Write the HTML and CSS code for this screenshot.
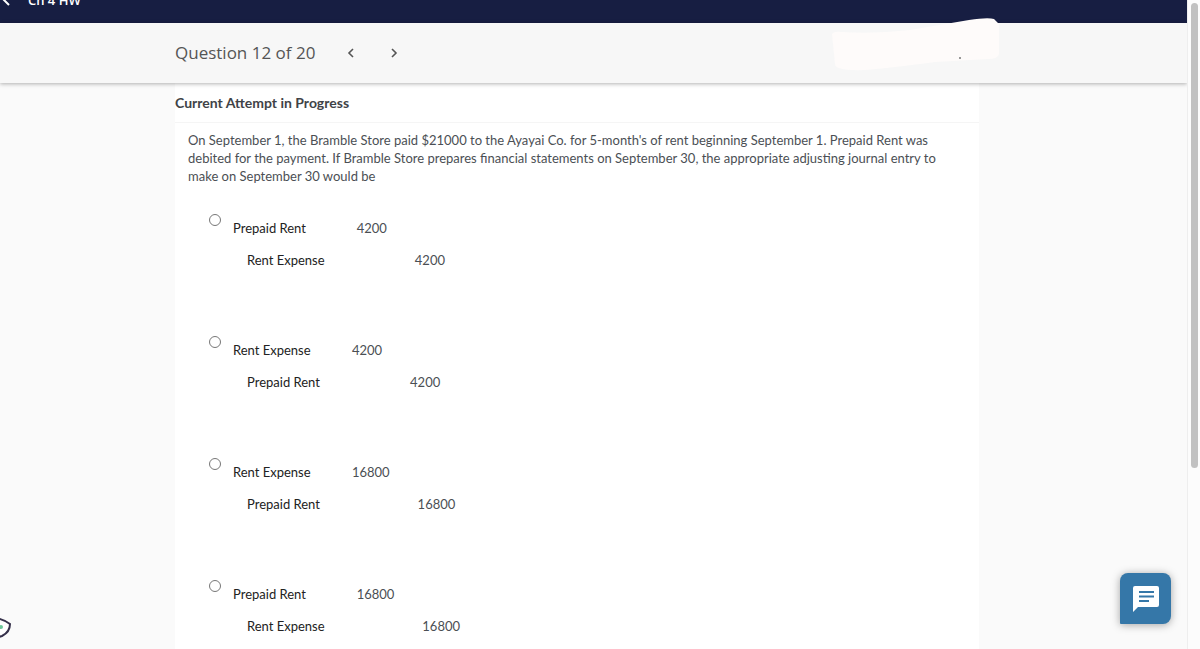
FILE: index.html
```
<!DOCTYPE html>
<html lang="en">
<head>
<meta charset="utf-8">
<title>Ch 4 HW</title>
<link rel="stylesheet" href="styles.css">
</head>
<body>
<div class="shell">
  <div class="page">
    <header class="topbar">
      <button class="back" type="button" aria-label="Back">
        <svg width="16" height="16" viewBox="0 0 16 16"><path d="M9 1 3 7l6 6" fill="none" stroke="#fff" stroke-width="2"/></svg>
      </button>
      <span class="topbar-title">Ch 4 HW</span>
    </header>
    <nav class="question-nav">
      <h1 class="question-title">Question 12 of 20</h1>
      <button class="step" type="button" aria-label="Previous question">
        <svg width="8" height="10" viewBox="0 0 8 10"><path d="M6 1 2 5l4 4" fill="none" stroke="#555" stroke-width="1.6"/></svg>
      </button>
      <button class="step" type="button" aria-label="Next question">
        <svg width="8" height="10" viewBox="0 0 8 10"><path d="m2 1 4 4-4 4" fill="none" stroke="#555" stroke-width="1.6"/></svg>
      </button>
      <svg class="smudge" width="170" height="56" viewBox="0 0 170 56" aria-hidden="true"><path d="M2 17Q4 14 12 15Q45 17 80 13L139 3Q158 0 164 2L169 7V37Q168 42 158 42L105 45Q60 51 35 53Q5 54 5 47Z" fill="#fefbfa"/><path d="M129 41h2" stroke="#777" stroke-width="1.5"/></svg>
    </nav>
    <main class="content">
      <h2 class="status">Current Attempt in Progress</h2>
      <form class="question">
        <p class="prompt">On September 1, the Bramble Store paid $21000 to the Ayayai Co. for 5-month's of rent beginning September 1. Prepaid Rent was debited for the payment. If Bramble Store prepares financial statements on September 30, the appropriate adjusting journal entry to make on September 30 would be</p>
        <div class="options">
          <div class="option">
            <input class="radio" type="radio" name="answer" id="a1" aria-labelledby="t1">
            <label for="a1"><table class="entry" id="t1">
              <tr><td class="account">Prepaid Rent</td><td class="debit">4200</td><td></td></tr>
              <tr><td class="account credited">Rent Expense</td><td></td><td>4200</td></tr>
            </table></label>
          </div>
          <div class="option">
            <input class="radio" type="radio" name="answer" id="a2" aria-labelledby="t2">
            <label for="a2"><table class="entry" id="t2">
              <tr><td class="account">Rent Expense</td><td class="debit">4200</td><td></td></tr>
              <tr><td class="account credited">Prepaid Rent</td><td></td><td>4200</td></tr>
            </table></label>
          </div>
          <div class="option">
            <input class="radio" type="radio" name="answer" id="a3" aria-labelledby="t3">
            <label for="a3"><table class="entry" id="t3">
              <tr><td class="account">Rent Expense</td><td class="debit">16800</td><td></td></tr>
              <tr><td class="account credited">Prepaid Rent</td><td></td><td>16800</td></tr>
            </table></label>
          </div>
          <div class="option">
            <input class="radio" type="radio" name="answer" id="a4" aria-labelledby="t4">
            <label for="a4"><table class="entry" id="t4">
              <tr><td class="account">Prepaid Rent</td><td class="debit">16800</td><td></td></tr>
              <tr><td class="account credited">Rent Expense</td><td></td><td>16800</td></tr>
            </table></label>
          </div>
        </div>
      </form>
    </main>
  </div>
  <div class="scroll-track"><div class="scroll-thumb"></div></div>
</div>
<svg class="badge" width="14" height="24" viewBox="0 0 14 24" aria-hidden="true"><path d="M-4 2Q5 4 10 8Q10 16 2 20L-4 22" fill="#fff" stroke="#35304a" stroke-width="2"/><circle cx="1" cy="11" r="2" fill="#6fc79a"/></svg>
<button class="chat" type="button" aria-label="Open chat">
  <svg width="28" height="28" viewBox="0 0 28 28"><path d="M3 1h22q2 0 2 2v17q0 2-2 2H6l-5 5V3q0-2 2-2Z" fill="#fff"/><path d="M7 7h15M7 11.500h15M7 16h10" stroke="#3577a8" stroke-width="2.200"/></svg>
</button>
</body>
</html>
```
FILE: styles.css
```
* {
  box-sizing: border-box;
}

body {
  margin: 0;
  height: 100vh;
  overflow: hidden;
  background: #fafafa;
  color: #4b4f54;
  font: 13px/18px Lato, sans-serif;
}

button {
  display: flex;
  align-items: center;
  justify-content: center;
  margin: 0;
  padding: 0;
  border: 0;
  background: none;
  cursor: pointer;
}

.shell {
  display: flex;
  height: 100%;
}

.page {
  flex: 1;
  display: flex;
  flex-direction: column;
  min-width: 0;
  overflow: hidden;
}

/* Scrolled halfway out of view */
.topbar {
  flex: none;
  display: flex;
  align-items: center;
  gap: 12px;
  height: 46px;
  margin-top: -23px;
  background: #171e42;
  color: #fff;
}

.topbar-title {
  font: 600 13px/20px "Open Sans", sans-serif;
}

.question-nav {
  position: relative;
  z-index: 1;
  flex: none;
  display: flex;
  align-items: center;
  height: 60px;
  padding-left: 175px;
  background: #f7f7f7;
  box-shadow: 0 1px 4px rgba(0, 0, 0, 0.3);
}

.question-title {
  margin: 0 14px 0 0;
  color: #555;
  font: 400 17px/24px "Open Sans", sans-serif;
}

.step {
  width: 43px;
  height: 44px;
}

.smudge {
  position: absolute;
  top: -6px;
  right: 187px;
}

.content {
  flex: 1;
  margin: 0 208px 0 175px;
  background: #fff;
}

.status {
  margin: 0;
  padding: 11px 0 10px;
  border-bottom: 1px solid #f5f5f5;
  color: #3f4347;
  font: 700 14px/18px Lato, sans-serif;
}

.question {
  padding: 8px 12px 0 13px;
}

.prompt {
  margin: 0;
}

.options {
  display: grid;
  gap: 58px;
  padding: 27px 0 0 21px;
}

.option {
  display: flex;
  align-items: flex-start;
  gap: 12px;
}

.radio {
  appearance: none;
  flex: none;
  width: 12px;
  height: 12px;
  margin: 2px 0 0;
  border: 1px solid #777;
  border-radius: 50%;
  background: #fff;
}

.radio:checked {
  background: #3577a8;
}

.entry {
  border-collapse: collapse;
}

.entry td {
  height: 32px;
  padding: 0;
}

.entry .account {
  padding-right: 32px;
  color: #222;
}

.entry .credited {
  padding-left: 14px;
}

.entry .debit {
  padding-right: 28px;
}

.scroll-track {
  flex: none;
  width: 13px;
  padding: 3px 2px 0 3px;
  border-left: 1px solid #eee;
  background: #fcfcfc;
}

.scroll-thumb {
  height: 72%;
  border-radius: 4px;
  background: #c1c1c1;
}

.badge {
  position: absolute;
  bottom: 9px;
  left: 0;
}

.chat {
  position: absolute;
  right: 29px;
  bottom: 25px;
  width: 51px;
  height: 51px;
  border-radius: 8px 8px 8px 1px;
  background: #3577a8;
  box-shadow: 0 1px 8px rgba(0, 0, 0, 0.35);
}
```
